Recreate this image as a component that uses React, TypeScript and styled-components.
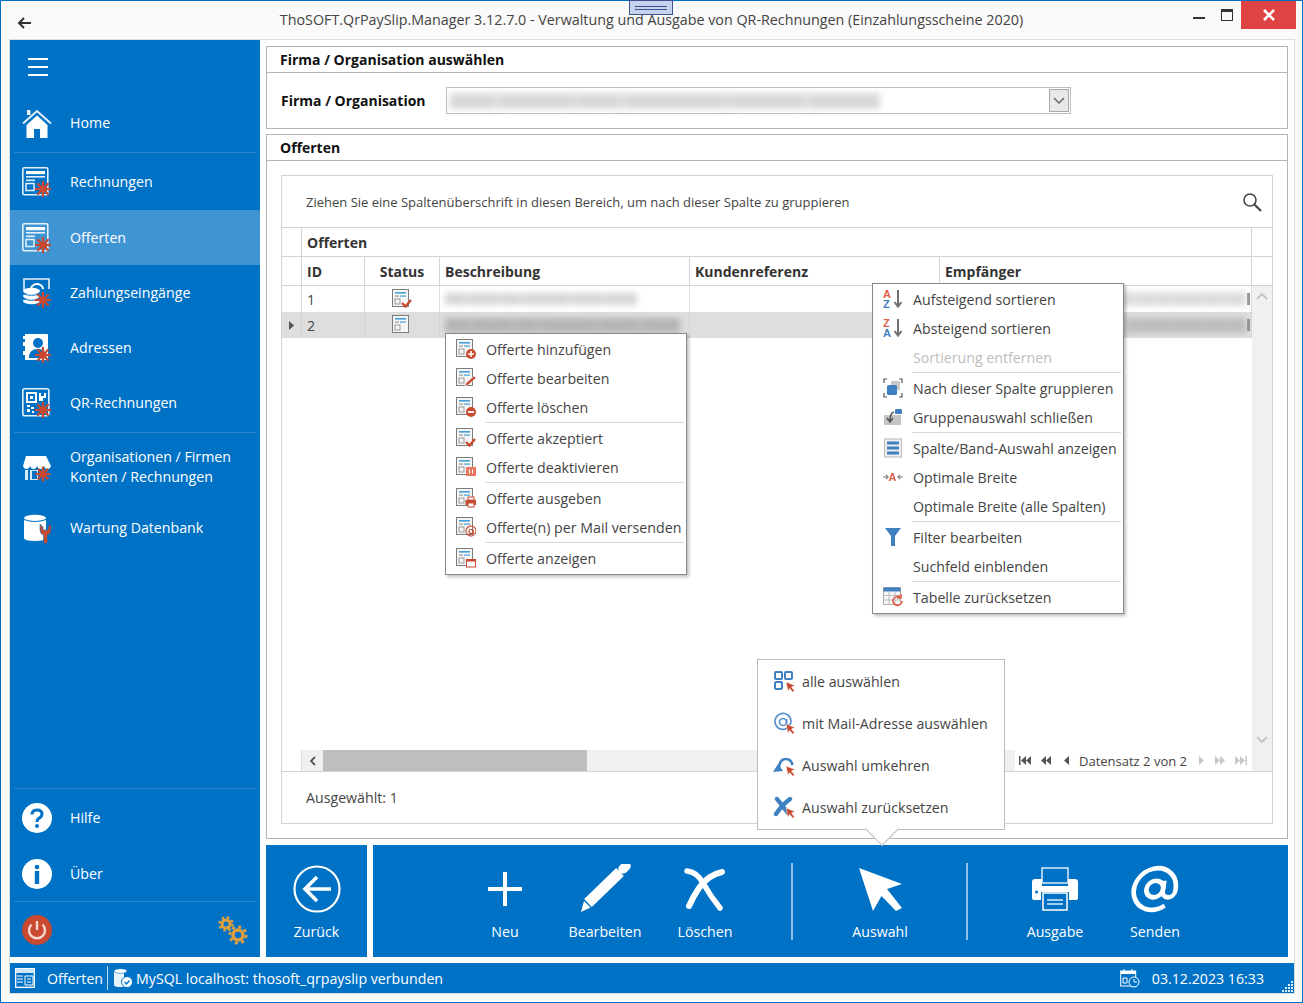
import React from "react";
import styled, { createGlobalStyle } from "styled-components";

const BLUE = "#0072c6";
const RED = "#c8492f";
const FONT = `"Open Sans", "Noto Sans", sans-serif`;

const Global = createGlobalStyle`
  html, body { margin: 0; padding: 0; background: #fafafa; overflow: hidden; }
  * { box-sizing: border-box; }
  body { font-family: ${FONT}; font-size: 14.2px; color: #444; }
`;

const Win = styled.div`
  position: relative; width: 1303px; height: 1003px; border: 1px solid ${BLUE};
  background: #fafafa; display: flex; flex-direction: column;
`;
const TitleBar = styled.header`
  height: 38px; display: grid; grid-template-columns: 1fr auto 1fr; align-items: start;
`;
const BackBtn = styled.div`padding: 13px 0 0 16px; height: 38px;`;
const Title = styled.div`padding-top: 9px; font-size: 14.3px; color: #444; white-space: nowrap;`;
const WinCtl = styled.div`display: flex; justify-content: flex-end; padding-right: 6px;`;
const WinBtn = styled.div`width: 28px; height: 28px;`;
const CloseBtn = styled.div`
  width: 55px; height: 28px; background: #e04343; display: flex; align-items: center; justify-content: center;
`;
const Handle = styled.div`
  position: absolute; left: 628px; top: -1px; width: 44px; height: 15px; background: #c6d3ee;
  border: 1px solid #3f5290; display: flex; flex-direction: column; gap: 2px; align-items: center; padding-top: 5px;
`;
const HandleLine = styled.i`display: block; width: 32px; height: 1px; background: #3f5290;`;

const Frame = styled.div`
  margin: 0 7px 8px 8px; flex: 1; border: 1px solid #dcdcdc; background: #fff;
  display: flex; flex-direction: column; gap: 6px;
`;
const Main = styled.div`display: flex; gap: 6px; height: 917px;`;

const Side = styled.nav`width: 250px; background: ${BLUE}; display: flex; flex-direction: column; color: #fff;`;
const Burger = styled.div`height: 54px; padding: 18px 0 0 18px; display: flex; flex-direction: column; gap: 6px;`;
const BurgerLine = styled.i`display: block; width: 20px; height: 2px; background: #fff;`;
const NavItem = styled.div<{ $h: number; $active?: boolean }>`
  height: ${p => p.$h}px; flex: none; display: flex; align-items: center; padding-left: 12px; gap: 18px;
  background: ${p => (p.$active ? "#3f94d3" : "transparent")}; font-size: 14.2px; line-height: 20px; color: #fff;
`;
const NavIcon = styled.svg`width: 30px; height: 30px; flex: none; display: block;`;
const NavSep = styled.hr`margin: 0 4px; height: 1px; flex: none; border: 0; background: #2a88cf;`;
const NavGap = styled.div<{ $h?: number }>`height: ${p => p.$h ?? 0}px; flex: ${p => (p.$h ? "none" : 1)};`;
const PowerRow = styled.div`height: 55px; flex: none; display: flex; align-items: center; justify-content: space-between; padding: 0 12px;`;

const Content = styled.div`width: 1022px; display: flex; flex-direction: column; padding-top: 6px;`;
const Panel = styled.section<{ $h: number }>`
  height: ${p => p.$h}px; border: 1px solid #b4b4b4; display: flex; flex-direction: column; margin-bottom: 5px; flex: none;
`;
const PanelHead = styled.h2`
  margin: 0; height: 26px; flex: none; border-bottom: 1px solid #b4b4b4; padding-left: 13px;
  font-size: 14px; line-height: 25px; font-weight: 700; color: #111;
`;
const FirmaRow = styled.div`display: flex; align-items: center; padding: 14px 0 0 14px; gap: 18px;`;
const FirmaLabel = styled.label`width: 147px; font-size: 14px; font-weight: 700; color: #111;`;
const Combo = styled.div`
  width: 625px; height: 27px; border: 1px solid #bcbcbc; display: flex; align-items: center; justify-content: space-between; padding: 0 1px 0 3px;
`;
const ComboBtn = styled.div`
  width: 20px; height: 23px; background: #e9e9e9; border: 1px solid #a8a8a8; display: flex; align-items: center; justify-content: center;
`;
const Blur = styled.div<{ $w: number; $tone: string; $h?: number }>`
  width: ${p => p.$w}px; height: ${p => p.$h ?? 12}px; flex: none;
  background: linear-gradient(90deg, ${p => p.$tone} 0 9%, ${p => p.$tone}cc 11%, ${p => p.$tone} 13% 27%, ${p => p.$tone}d8 29%, ${p => p.$tone} 31% 38%, ${p => p.$tone}cc 40%, ${p => p.$tone} 42% 63%, ${p => p.$tone}d8 65%, ${p => p.$tone} 67% 81%, ${p => p.$tone}cc 83%, ${p => p.$tone} 85% 100%);
  filter: blur(3px);
`;

const GridBox = styled.div`
  margin: 14px; flex: 1; border: 1px solid #d4d4d4; display: flex; flex-direction: column; font-size: 13px;
`;
const GroupBar = styled.div`
  height: 52px; flex: none; border-bottom: 1px solid #d4d4d4; display: flex; align-items: center; justify-content: space-between;
  padding: 0 10px 0 24px; font-size: 13px; color: #444;
`;
const COLS = "20px 63px 75px 250px 250px 312px 20px";
const HeadRow = styled.div`
  display: grid; grid-template-columns: ${COLS}; height: 29px; flex: none; border-bottom: 1px solid #d4d4d4;
`;
const BandRow = styled.div`
  display: grid; grid-template-columns: 20px 950px 20px; height: 29px; flex: none; border-bottom: 1px solid #d4d4d4;
`;
const Cell = styled.div<{ $center?: boolean }>`
  border-right: 1px solid #d4d4d4; padding-left: ${p => (p.$center ? 0 : 5)}px; display: flex; align-items: center; overflow: hidden;
  font-size: 14px; font-weight: 700; color: #333; justify-content: ${p => (p.$center ? "center" : "flex-start")};
`;
const LastCell = styled.div``;
const Data = styled.div`display: flex; height: 485px; flex: none;`;
const DataLeft = styled.div`width: 970px; display: flex; flex-direction: column;`;
const Rows = styled.div`flex: 1;`;
const DataRow = styled.div<{ $sel?: boolean }>`
  display: grid; grid-template-columns: 20px 63px 75px 250px 250px 312px; height: 26px;
  background: ${p => (p.$sel ? "#dedede" : "#fff")};
`;
const DataCell = styled.div<{ $center?: boolean; $sel?: boolean }>`
  border-right: 1px solid ${p => (p.$sel ? "#d2d2d2" : "#dcdcdc")}; padding-left: ${p => (p.$center ? 0 : 5)}px; display: flex; align-items: center; gap: 0;
  font-size: 14.2px; color: #444; overflow: hidden; justify-content: ${p => (p.$center ? "center" : "flex-start")};
`;
const MailCell = styled(DataCell)`justify-content: flex-end; padding-right: 1px;`;
const EndMark = styled.i`display: block; width: 3px; height: 12px; background: #8a8a8a; margin-left: 1px; flex: none;`;
const VScroll = styled.div`
  width: 20px; background: #f0f0f0; display: flex; flex-direction: column; justify-content: space-between; align-items: center; padding: 6px 0 27px;
`;
const HScroll = styled.div`height: 21px; flex: none; display: flex; background: #f0f0f0; border-top: 0;`;
const HBlank = styled.div`width: 20px; background: #fff; border-right: 1px solid #dcdcdc;`;
const HArrow = styled.div`width: 21px; display: flex; align-items: center; justify-content: center;`;
const HThumb = styled.div`width: 264px; background: #bebebe;`;
const HTrack = styled.div`width: 428px;`;
const Pager = styled.div`
  flex: 1; background: #fff; display: flex; align-items: center; padding-left: 4px; font-size: 13px; color: #444; white-space: nowrap;
`;
const PagerText = styled.span`margin: 1px 11px 0 9px;`;
const PagerIcon = styled.svg<{ $w: number; $gap?: number }>`width: ${p => p.$w}px; height: 11px; flex: none; margin-right: ${p => p.$gap ?? 0}px;`;
const Foot = styled.div`flex: 1; border-top: 1px solid #d4d4d4; display: flex; align-items: center; padding: 0 0 0 24px; font-size: 14.2px; color: #444;`;

const ToolRow = styled.div`display: flex; gap: 6px; height: 112px; margin-top: 1px;`;
const ToolBlock = styled.div`background: ${BLUE}; display: flex; align-items: stretch; color: #fff;`;
const BackBlock = styled(ToolBlock)`width: 101px; justify-content: center;`;
const MainBlock = styled(ToolBlock)`flex: 1; padding-left: 82px;`;
const ToolBtn = styled.div`
  width: 100px; display: flex; flex-direction: column; align-items: center; font-size: 14.2px; color: #fff; padding-top: 19px;
`;
const ToolIconBox = styled.div`height: 50px; display: flex; align-items: center; justify-content: center; margin-bottom: 8px;`;
const ToolLabel = styled.span`line-height: 20px; white-space: nowrap;`;
const ToolSep = styled.div`width: 2px; height: 77px; margin: 18px 37px 0 36px; background: #8fc2e6;`;

const Status = styled.footer`
  height: 30px; background: ${BLUE}; color: #fff; display: flex; align-items: center; position: relative; padding-left: 5px; font-size: 14.2px; white-space: nowrap;
`;
const StatusIcon = styled.svg`width: 20px; height: 20px; flex: none; display: block;`;
const StatusText = styled.span`margin-left: 12px;`;
const StatusSep = styled.i`display: block; width: 1px; height: 24px; background: #bcdcf2; margin: 0 5px 0 4px;`;
const StatusDb = styled.span`margin-left: 3px;`;
const StatusRight = styled.div`margin-left: auto; display: flex; align-items: center; gap: 12px; padding-right: 30px;`;
const Grip = styled.svg`position: absolute; right: 1px; bottom: 1px; width: 11px; height: 11px;`;

const Menu = styled.div`
  position: absolute; background: #fff; border: 1px solid #85898f; box-shadow: 2px 2px 3px rgba(0,0,0,.25);
  padding: 0.5px 2px 1px 0; z-index: 5; color: #444; font-size: 14.2px; white-space: nowrap;
`;
const OfferMenu = styled(Menu)`left: 444px; top: 332px; width: 242px; height: 242px;`;
const ColumnMenu = styled(Menu)`left: 871px; top: 282px; width: 252px; height: 331px;`;
const Item = styled.div<{ $off?: boolean }>`
  height: 29px; display: flex; align-items: center; gap: 10px; padding-left: 10px; color: ${p => (p.$off ? "#bdbdbd" : "#444")};
`;
const ItemIcon = styled.svg`width: 20px; height: 20px; flex: none; display: block;`;
const MenuSep = styled.hr`height: 2px; border: 0; border-top: 1px solid #d8d8d8; margin: 0 0 0 39px;`;
const SelectPop = styled.div`
  position: absolute; left: 756px; top: 658px; width: 248px; height: 171px; background: #fff; border: 1px solid #bcbcbc;
  z-index: 5; color: #444; font-size: 14.2px; white-space: nowrap;
  &::after {
    content: ""; position: absolute; left: 112px; bottom: -12px; width: 23px; height: 23px; background: #fff;
    border-right: 1px solid #bcbcbc; border-bottom: 1px solid #bcbcbc; transform: rotate(45deg);
  }
`;
const PopItem = styled.div`height: 42px; display: flex; align-items: center; gap: 7px; padding-left: 15px;`;
const PopIcon = styled.svg`width: 22px; height: 22px; flex: none; display: block;`;

const Spark = ({ x = 21, y = 22, r = 8 }: { x?: number; y?: number; r?: number }) => {
  const d = r * 0.707;
  return (
    <g stroke={RED} strokeWidth={2.2} fill={RED}>
      <line x1={x - r} y1={y} x2={x + r} y2={y} />
      <line x1={x} y1={y - r} x2={x} y2={y + r} />
      <line x1={x - d} y1={y - d} x2={x + d} y2={y + d} />
      <line x1={x - d} y1={y + d} x2={x + d} y2={y - d} />
      <circle cx={x} cy={y} r={r * 0.45} stroke="none" />
    </g>
  );
};

const DocLines = () => (
  <g>
    <rect x=".8" y=".8" width="25" height="27" rx="1.5" fill="none" stroke="#e4f1fb" strokeWidth="1.6" />
    <rect x="4" y="4" width="19" height="3.200" fill="#fff" />
    <rect x="4" y="9" width="19" height="1.600" fill="#e4f1fb" />
    <rect x="4" y="12.500" width="9" height="1.600" fill="#e4f1fb" />
    <rect x="4" y="16.500" width="8" height="7" fill="none" stroke="#e4f1fb" strokeWidth="1.500" />
  </g>
);

const nav = {
  home: (
    <NavIcon viewBox="0 0 30 30">
      <path d="M1 15.500 15 3 29 15.500" fill="none" stroke="#e4f1fb" strokeWidth="2" />
      <rect x="5" y="2" width="3.500" height="5" fill="#e4f1fb" />
      <path d="M4.500 17 15 7.500 25.500 17v13H18V21h-6v9H4.500z" fill="#fff" />
    </NavIcon>
  ),
  doc: (
    <NavIcon viewBox="0 0 30 30">
      <DocLines />
      <Spark />
    </NavIcon>
  ),
  pay: (
    <NavIcon viewBox="0 0 30 30">
      <path d="M2 12V1h25v10" fill="none" stroke="#e4f1fb" strokeWidth="1.600" />
      <path d="M9 11a6 5 0 0 1 12 0" fill="none" stroke="#fff" strokeWidth="2" />
      <ellipse cx="9.500" cy="13" rx="8.500" ry="3.200" fill="#fff" />
      <ellipse cx="9.500" cy="18" rx="8.500" ry="3.200" fill="#fff" />
      <ellipse cx="9.500" cy="23" rx="8.500" ry="3.200" fill="#fff" />
      <path d="M1 15.600q8.500 3.400 17 0M1 20.600q8.500 3.400 17 0" fill="none" stroke={BLUE} />
      <Spark />
    </NavIcon>
  ),
  addr: (
    <NavIcon viewBox="0 0 30 30">
      <path d="M3 1h22a1 1 0 0 1 1 1v24a1 1 0 0 1-1 1H3v-5H1v-4h2v-5H1v-4h2V6H1V3h2z" fill="#fff" />
      <circle cx="16" cy="10" r="5" fill={BLUE} />
      <path d="M7 25c0-6 3-9 9-9s8 3 8 9z" fill={BLUE} />
      <Spark />
    </NavIcon>
  ),
  qr: (
    <NavIcon viewBox="0 0 30 30">
      <rect x=".8" y=".8" width="26" height="27" rx="2" fill="none" stroke="#e4f1fb" strokeWidth="1.600" />
      <rect x="5" y="5" width="9" height="9" fill="none" stroke="#fff" strokeWidth="2" />
      <rect x="8" y="8" width="3" height="3" fill="#fff" />
      <path d="M17 5h2v3h3V5h2v5h-3v3h-4z" fill="#fff" />
      <path d="M5 17h3v2H5zM9 19h3v2H9zM5 21h3v3H5zM10 23h2v2h-2z" fill="#fff" />
      <Spark />
    </NavIcon>
  ),
  org: (
    <NavIcon viewBox="0 0 30 30">
      <path d="M4 4h20l5 10q-1 3-3.600 3T22 14q-1 3-3.500 3T15 14q-1 3-3.500 3T8 14q-1 3-3.500 3T1 14z" fill="#fff" />
      <path d="M3 18h3v10H3zM8 18h8v10H8z" fill="#fff" opacity=".85" />
      <rect x="10" y="19" width="5" height="8" fill={BLUE} />
      <Spark x={21} y={22} r={7.500} />
    </NavIcon>
  ),
  db: (
    <NavIcon viewBox="0 0 30 30">
      <path d="M2 6v19q0 3 11 3t11-3V6z" fill="#fff" />
      <ellipse cx="13" cy="5" rx="11" ry="3.200" fill="#fff" />
      <path d="M2 6.500q11 4 22 0" fill="none" stroke={BLUE} strokeWidth="1.200" />
      <path d="M18 11v6q0 4 3.500 5v9h4v-9q3.500-1 3.500-5v-6l-3 3v3h-5v-3z" fill={RED} stroke={BLUE} strokeWidth=".6" />
    </NavIcon>
  ),
  help: (
    <NavIcon viewBox="0 0 30 30">
      <circle cx="15" cy="15" r="15" fill="#fff" />
      <path d="M10 11.500q0-4.500 5-4.500t5 4q0 2.500-2.500 3.800Q15 16 15 19" fill="none" stroke={BLUE} strokeWidth="3" />
      <circle cx="15" cy="23" r="2" fill={BLUE} />
    </NavIcon>
  ),
  info: (
    <NavIcon viewBox="0 0 30 30">
      <circle cx="15" cy="15" r="15" fill="#fff" />
      <circle cx="15" cy="8" r="2.300" fill={BLUE} />
      <rect x="12.800" y="12" width="4.400" height="13" fill={BLUE} />
    </NavIcon>
  ),
  power: (
    <NavIcon viewBox="0 0 30 30">
      <circle cx="15" cy="15" r="15" fill={RED} />
      <path d="M9.500 9.500a8 8 0 1 0 11 0" fill="none" stroke="#f6d8d0" strokeWidth="2.400" />
      <line x1="15" y1="6" x2="15" y2="15" stroke="#f6d8d0" strokeWidth="2.400" />
    </NavIcon>
  ),
  gears: (
    <NavIcon viewBox="0 0 30 30">
      <g fill="none" stroke="#e0a040">
        <circle cx="8" cy="9" r="4" strokeWidth="3" />
        <circle cx="8" cy="9" r="6.500" strokeWidth="2.500" strokeDasharray="2.500 2.600" />
        <circle cx="20" cy="20" r="5" strokeWidth="3.500" />
        <circle cx="20" cy="20" r="8.200" strokeWidth="2.800" strokeDasharray="3 3.430" />
      </g>
    </NavIcon>
  ),
};

const BaseDoc = ({ color = "#4a9fd4" }: { color?: string }) => (
  <g>
    <rect x=".5" y=".5" width="16" height="17" fill="#f5f5f5" stroke="#7c7c7c" />
    <rect x="3" y="3" width="11" height="1.600" fill={color} />
    <rect x="8" y="6.500" width="6" height="1.200" fill={color} />
    <rect x="3" y="6.500" width="4" height="1.200" fill="#999" />
    <rect x="3" y="10" width="5" height="5" fill="none" stroke="#999" />
  </g>
);

const badges: Record<string, React.ReactNode> = {
  add: (<g><circle cx="15" cy="15" r="5" fill={RED} /><path d="M12 15h6M15 12v6" stroke="#fff" strokeWidth="1.500" /></g>),
  edit: (<path d="M9 18l1-3L18 8l2 2-8 7z" fill={RED} stroke="#fff" strokeWidth=".5" />),
  del: (<g><circle cx="15" cy="15" r="5" fill={RED} /><path d="M12 15h6" stroke="#fff" strokeWidth="1.800" /></g>),
  ok: (<path d="M10 14l3.500 3.500L19 11" fill="none" stroke={RED} strokeWidth="2.400" />),
  off: (<g><rect x="10" y="10" width="10" height="9" fill="#e8775f" /><path d="M13.500 12.500v4M16.500 12.500v4" stroke="#fff" /></g>),
  print: (<g><rect x="12" y="9" width="6" height="3" fill="#fff" stroke={RED} /><rect x="9.500" y="12" width="10.500" height="5" fill={RED} /><rect x="12" y="15" width="6" height="4" fill="#fff" stroke={RED} /></g>),
  mail: (<g fill="none" stroke={RED} strokeWidth="1.100"><circle cx="15" cy="14.500" r="2" /><path d="M17 12.500v3q0 1.500 1.500 1.500t1.500-3a5 5 0 1 0-2 4" /></g>),
  show: (<g><rect x="10.500" y="11.500" width="9" height="7.500" fill="#fff" stroke={RED} /><rect x="10.500" y="11.500" width="9" height="2" fill={RED} /></g>),
};

const FormIcon = ({ b }: { b: string }) => (
  <ItemIcon viewBox="0 0 20 20">
    <BaseDoc />
    {badges[b]}
  </ItemIcon>
);

const Tri = ({ dir, c }: { dir: "l" | "r"; c: string }) => (
  <path d={dir === "l" ? "M6 1v9L1 5.500z" : "M1 1v9l5-4.500z"} fill={c} />
);

const offerItems: ([string, string] | null)[] = [
  ["add", "Offerte hinzufügen"], ["edit", "Offerte bearbeiten"], ["del", "Offerte löschen"], null,
  ["ok", "Offerte akzeptiert"], ["off", "Offerte deaktivieren"], null,
  ["print", "Offerte ausgeben"], ["mail", "Offerte(n) per Mail versenden"], null,
  ["show", "Offerte anzeigen"],
];

const SortIcon = ({ a, b, ca, cb }: { a: string; b: string; ca: string; cb: string }) => (
  <ItemIcon viewBox="0 0 20 20">
    <text x="0" y="9" fontSize="11" fontWeight="700" fontFamily="Liberation Sans" fill={ca}>{a}</text>
    <text x="0" y="19" fontSize="11" fontWeight="700" fontFamily="Liberation Sans" fill={cb}>{b}</text>
    <path d="M15 1v15M11.500 13l3.500 4.500 3.500-4.500" fill="none" stroke="#707070" strokeWidth="2" />
  </ItemIcon>
);

const colIcons: Record<string, React.ReactNode> = {
  asc: <SortIcon a="A" b="Z" ca="#e0604a" cb="#3f80c0" />,
  desc: <SortIcon a="Z" b="A" ca="#e0604a" cb="#3f80c0" />,
  group: (
    <ItemIcon viewBox="0 0 20 20">
      <path d="M1 5V1h3M16 1h3v4M19 15v4h-3M4 19H1v-4" fill="none" stroke="#555" strokeWidth="1.200" />
      <rect x="8" y="3" width="9" height="9" rx="1" fill="#c8c8c8" />
      <rect x="4" y="7" width="10" height="10" rx="1.500" fill="#3f80c0" />
    </ItemIcon>
  ),
  close: (
    <ItemIcon viewBox="0 0 20 20">
      <rect x="1" y="8" width="17" height="10" fill="#c4c4c4" />
      <rect x="12" y="2" width="7" height="5" rx="1" fill="#3f80c0" />
      <path d="M11 5Q7 6 7 14M4 11l3 4 3-4" fill="none" stroke="#555" strokeWidth="1.600" />
    </ItemIcon>
  ),
  list: (
    <ItemIcon viewBox="0 0 20 20">
      <rect x="1.500" y="1" width="17" height="18" fill="#eee" stroke="#bbb" />
      <rect x="4" y="3.500" width="12" height="3" fill="#3f80c0" />
      <rect x="4" y="8.500" width="12" height="3" fill="#3f80c0" />
      <rect x="4" y="13.500" width="12" height="3" fill="#3f80c0" />
    </ItemIcon>
  ),
  fit: (
    <ItemIcon viewBox="0 0 20 20">
      <path d="M0 10h3.500M3 8l2 2-2 2M20 10h-3.500M17 8l-2 2 2 2" fill="none" stroke="#777" strokeWidth="1.200" />
      <text x="5.500" y="14" fontSize="11" fontWeight="700" fontFamily="Liberation Sans" fill="#e0604a">A</text>
    </ItemIcon>
  ),
  filter: (
    <ItemIcon viewBox="0 0 20 20">
      <path d="M2 1h16l-6 8v10h-4V9z" fill="#3f80c0" />
    </ItemIcon>
  ),
  reset: (
    <ItemIcon viewBox="0 0 20 20">
      <rect x=".5" y=".5" width="17" height="17" fill="#f6f6f6" stroke="#b5a9a0" />
      <rect x=".5" y=".5" width="17" height="4" fill="#3f80c0" />
      <path d="M.5 8.500h17M.5 13h17M6 4v14M12 4v14" stroke="#bbb" />
      <path d="M19 14a4.500 4.500 0 1 1-1.500-3.500M18 7v4h-4" fill="none" stroke="#e0604a" strokeWidth="1.600" />
    </ItemIcon>
  ),
};

const colItems: ([string | null, string, boolean?] | null)[] = [
  ["asc", "Aufsteigend sortieren"], ["desc", "Absteigend sortieren"], [null, "Sortierung entfernen", true], null,
  ["group", "Nach dieser Spalte gruppieren"], ["close", "Gruppenauswahl schließen"], null,
  ["list", "Spalte/Band-Auswahl anzeigen"], ["fit", "Optimale Breite"], [null, "Optimale Breite (alle Spalten)"], null,
  ["filter", "Filter bearbeiten"], [null, "Suchfeld einblenden"], null,
  ["reset", "Tabelle zurücksetzen"],
];

const Cur = () => <path d="M13 12l9 3.500-3.500 1.500 3 4-1.800 1.200-3-3.800-1.700 2.800z" fill={RED} stroke="#fff" strokeWidth=".5" />;
const popIcons: React.ReactNode[] = [
  <PopIcon viewBox="0 0 22 22" key="a">
    <g fill="none" stroke="#3f80c0" strokeWidth="2"><rect x="2" y="2" width="7" height="7" rx="1" /><rect x="12" y="2" width="7" height="7" rx="1" /><rect x="2" y="12" width="7" height="7" rx="1" /></g>
    <Cur />
  </PopIcon>,
  <PopIcon viewBox="0 0 22 22" key="b">
    <g fill="none" stroke="#5a94cc" strokeWidth="1.700"><circle cx="10" cy="10" r="3.500" /><path d="M13.500 7v4q0 2 1.800 2 2.700 0 2.700-4a8 8 0 1 0-3.500 7" /></g>
    <Cur />
  </PopIcon>,
  <PopIcon viewBox="0 0 22 22" key="c">
    <path d="M6 15Q6 5 13 5q5 0 6.500 6" fill="none" stroke="#3f80c0" strokeWidth="2.600" />
    <path d="M0 18l10-1-5-7z" fill="#3f80c0" />
    <Cur />
  </PopIcon>,
  <PopIcon viewBox="0 0 22 22" key="d">
    <path d="M4 3l11 14M17 3Q9 9 3 18" fill="none" stroke="#3f80c0" strokeWidth="4.400" strokeLinecap="round" />
    <Cur />
  </PopIcon>,
];
const popItems = ["alle auswählen", "mit Mail-Adresse auswählen", "Auswahl umkehren", "Auswahl zurücksetzen"];

const tools = {
  back: (
    <svg width="48" height="48" viewBox="0 0 48 48">
      <circle cx="24" cy="24" r="22.500" fill="none" stroke="#fff" strokeWidth="2.200" />
      <path d="M38 24H12M24 12 12 24l12 12" fill="none" stroke="#fff" strokeWidth="3.600" />
    </svg>
  ),
  add: (
    <svg width="36" height="36" viewBox="0 0 36 36">
      <path d="M18 1v34M1 18h34" stroke="#fff" strokeWidth="4" />
    </svg>
  ),
  edit: (
    <svg width="52" height="50" viewBox="0 0 52 50">
      <line x1="9" y1="39" x2="41" y2="8" stroke="#fff" strokeWidth="11" />
      <line x1="44" y1="5" x2="47" y2="2" stroke="#fff" strokeWidth="9.500" strokeLinecap="round" />
      <path d="M2 48l3-11 6.500 6.500z" fill="#fff" />
    </svg>
  ),
  del: (
    <svg width="42" height="44" viewBox="0 0 42 44">
      <path d="M3 4q10 1 16 12 8 14 17 25" fill="none" stroke="#fff" strokeWidth="5.500" strokeLinecap="round" />
      <path d="M38 5Q24 8 15 21 9 30 5 39" fill="none" stroke="#fff" strokeWidth="6" strokeLinecap="round" />
    </svg>
  ),
  sel: (
    <svg width="47" height="47" viewBox="0 0 47 47">
      <path d="M2 2l43 16-15 5 15 19-6 3-14.500-15L16 45z" fill="#fff" />
    </svg>
  ),
  print: (
    <svg width="48" height="45" viewBox="0 0 48 45">
      <rect x="11" y="1" width="26" height="15" fill="none" stroke="#d9ecf9" strokeWidth="1.500" />
      <path d="M4 12h7v7h26v-7h7q3 0 3 3v16q0 2-3 2h-6v-8H10v8H4q-3 0-3-2V15q0-3 3-3z" fill="#fff" />
      <circle cx="5.500" cy="25" r="1.500" fill={BLUE} />
      <rect x="12" y="26" width="24" height="17" fill={BLUE} stroke="#fff" strokeWidth="1.500" />
      <path d="M16 33h16M16 37h16" stroke="#d9ecf9" strokeWidth="1.500" />
    </svg>
  ),
  at: (
    <svg width="50" height="50" viewBox="0 0 24 24">
      <g fill="none" stroke="#fff" strokeWidth="2.200" transform="skewX(-9) translate(2.300 0)">
        <circle cx="11.500" cy="12" r="4" />
        <path d="M15.500 8v5a3 3 0 0 0 6 0v-1a10 10 0 1 0-4 8" />
      </g>
    </svg>
  ),
};

const Tool = ({ icon, label }: { icon: React.ReactNode; label: string }) => (
  <ToolBtn>
    <ToolIconBox>{icon}</ToolIconBox>
    <ToolLabel>{label}</ToolLabel>
  </ToolBtn>
);

export default function App() {
  return (
    <>
      <Global />
      <Win>
        <TitleBar>
          <BackBtn>
            <svg width="14" height="12" viewBox="0 0 14 12"><path d="M14 6H2M7 1 2 6l5 5" fill="none" stroke="#333" strokeWidth="2" /></svg>
          </BackBtn>
          <Title>ThoSOFT.QrPaySlip.Manager 3.12.7.0 - Verwaltung und Ausgabe von QR-Rechnungen (Einzahlungsscheine 2020)</Title>
          <WinCtl>
            <WinBtn>
              <svg width="28" height="28" viewBox="0 0 28 28"><rect x="8" y="16" width="12" height="2" fill="#333" /></svg>
            </WinBtn>
            <WinBtn>
              <svg width="28" height="28" viewBox="0 0 28 28"><rect x="8.500" y="8.500" width="11" height="11" fill="none" stroke="#333" /><rect x="8" y="8" width="12" height="3" fill="#333" /></svg>
            </WinBtn>
            <CloseBtn>
              <svg width="12" height="12" viewBox="0 0 12 12"><path d="M1 1l10 10M11 1 1 11" stroke="#fff" strokeWidth="2.600" /></svg>
            </CloseBtn>
          </WinCtl>
        </TitleBar>
        <Handle><HandleLine /><HandleLine /></Handle>
        <Frame>
          <Main>
            <Side>
              <Burger><BurgerLine /><BurgerLine /><BurgerLine /></Burger>
              <NavItem $h={58}>{nav.home}<span>Home</span></NavItem>
              <NavSep />
              <NavItem $h={57}>{nav.doc}<span>Rechnungen</span></NavItem>
              <NavItem $h={55} $active>{nav.doc}<span>Offerten</span></NavItem>
              <NavItem $h={55}>{nav.pay}<span>Zahlungseingänge</span></NavItem>
              <NavItem $h={55}>{nav.addr}<span>Adressen</span></NavItem>
              <NavItem $h={55}>{nav.qr}<span>QR-Rechnungen</span></NavItem>
              <NavGap $h={2} />
              <NavSep />
              <NavItem $h={68}>{nav.org}<span>Organisationen / Firmen<br />Konten / Rechnungen</span></NavItem>
              <NavItem $h={54}>{nav.db}<span>Wartung Datenbank</span></NavItem>
              <NavGap />
              <NavSep />
              <NavItem $h={57}>{nav.help}<span>Hilfe</span></NavItem>
              <NavItem $h={55}>{nav.info}<span>Über</span></NavItem>
              <NavSep />
              <PowerRow>{nav.power}{nav.gears}</PowerRow>
            </Side>
            <Content>
              <Panel $h={83}>
                <PanelHead>Firma / Organisation auswählen</PanelHead>
                <FirmaRow>
                  <FirmaLabel>Firma / Organisation</FirmaLabel>
                  <Combo>
                    <Blur $w={430} $tone="#d8d8d8" $h={16} />
                    <ComboBtn>
                      <svg width="12" height="8" viewBox="0 0 12 8"><path d="M1 1l5 5 5-5" fill="none" stroke="#666" strokeWidth="1.500" /></svg>
                    </ComboBtn>
                  </Combo>
                </FirmaRow>
              </Panel>
              <Panel $h={705}>
                <PanelHead>Offerten</PanelHead>
                <GridBox>
                  <GroupBar>
                    <span>Ziehen Sie eine Spaltenüberschrift in diesen Bereich, um nach dieser Spalte zu gruppieren</span>
                    <svg width="20" height="20" viewBox="0 0 20 20"><circle cx="8" cy="8" r="6" fill="none" stroke="#444" strokeWidth="1.600" /><path d="M12.500 12.500 19 19" stroke="#444" strokeWidth="2.200" /></svg>
                  </GroupBar>
                  <BandRow>
                    <Cell />
                    <Cell>Offerten</Cell>
                    <LastCell />
                  </BandRow>
                  <HeadRow>
                    <Cell />
                    <Cell>ID</Cell>
                    <Cell $center>Status</Cell>
                    <Cell>Beschreibung</Cell>
                    <Cell>Kundenreferenz</Cell>
                    <Cell>Empfänger</Cell>
                    <LastCell />
                  </HeadRow>
                  <Data>
                    <DataLeft>
                      <Rows>
                        <DataRow>
                          <DataCell />
                          <DataCell>1</DataCell>
                          <DataCell $center>
                            <ItemIcon viewBox="0 0 20 20"><BaseDoc />{badges.ok}</ItemIcon>
                          </DataCell>
                          <DataCell><Blur $w={192} $tone="#d6d6d6" /></DataCell>
                          <DataCell />
                          <MailCell>
                            <Blur $w={125} $tone="#dcdcdc" $h={14} />
                            <EndMark />
                          </MailCell>
                        </DataRow>
                        <DataRow $sel>
                          <DataCell $sel $center>
                            <svg width="7" height="11" viewBox="0 0 7 11"><Tri dir="r" c="#555" /></svg>
                          </DataCell>
                          <DataCell $sel>2</DataCell>
                          <DataCell $sel $center>
                            <ItemIcon viewBox="0 0 20 20"><BaseDoc /></ItemIcon>
                          </DataCell>
                          <DataCell $sel><Blur $w={235} $tone="#b4b4b4" $h={15} /></DataCell>
                          <DataCell $sel />
                          <MailCell $sel>
                            <Blur $w={120} $tone="#bcbcbc" $h={15} />
                            <EndMark />
                          </MailCell>
                        </DataRow>
                      </Rows>
                      <HScroll>
                        <HBlank />
                        <HArrow>
                          <svg width="10" height="10" viewBox="0 0 10 10"><path d="M7 1 3 5l4 4" fill="none" stroke="#555" strokeWidth="1.800" /></svg>
                        </HArrow>
                        <HThumb />
                        <HTrack />
                        <Pager>
                          <PagerIcon $w={12} $gap={10} viewBox="0 0 12 11"><rect x="0" y="1" width="1.500" height="9" fill="#555" /><path d="M7 1v9L2 5.500zM12 1v9L7 5.500z" fill="#555" /></PagerIcon>
                          <PagerIcon $w={10} $gap={12} viewBox="0 0 10 11"><path d="M5 1v9L0 5.500zM10 1v9L5 5.500z" fill="#555" /></PagerIcon>
                          <PagerIcon $w={7} viewBox="0 0 7 11"><Tri dir="l" c="#555" /></PagerIcon>
                          <PagerText>Datensatz 2 von 2</PagerText>
                          <PagerIcon $w={7} $gap={10} viewBox="0 0 7 11"><Tri dir="r" c="#c8c8c8" /></PagerIcon>
                          <PagerIcon $w={10} $gap={10} viewBox="0 0 10 11"><path d="M0 1v9l5-4.500zM5 1v9l5-4.500z" fill="#c8c8c8" /></PagerIcon>
                          <PagerIcon $w={12} viewBox="0 0 12 11"><path d="M0 1v9l5-4.500zM5 1v9l5-4.500z" fill="#c8c8c8" /><rect x="10.500" y="1" width="1.500" height="9" fill="#c8c8c8" /></PagerIcon>
                        </Pager>
                      </HScroll>
                    </DataLeft>
                    <VScroll>
                      <svg width="12" height="8" viewBox="0 0 12 8"><path d="M1 7l5-5 5 5" fill="none" stroke="#c4c4c4" strokeWidth="1.800" /></svg>
                      <svg width="12" height="8" viewBox="0 0 12 8"><path d="M1 1l5 5 5-5" fill="none" stroke="#c4c4c4" strokeWidth="1.800" /></svg>
                    </VScroll>
                  </Data>
                  <Foot>Ausgewählt: 1</Foot>
                </GridBox>
              </Panel>
              <ToolRow>
                <BackBlock>
                  <Tool icon={tools.back} label="Zurück" />
                </BackBlock>
                <MainBlock>
                  <Tool icon={tools.add} label="Neu" />
                  <Tool icon={tools.edit} label="Bearbeiten" />
                  <Tool icon={tools.del} label="Löschen" />
                  <ToolSep />
                  <Tool icon={tools.sel} label="Auswahl" />
                  <ToolSep />
                  <Tool icon={tools.print} label="Ausgabe" />
                  <Tool icon={tools.at} label="Senden" />
                </MainBlock>
              </ToolRow>
            </Content>
          </Main>
          <Status>
            <StatusIcon viewBox="0 0 20 20">
              <rect x=".7" y=".7" width="18.600" height="18.600" fill="none" stroke="#fff" strokeWidth="1.300" />
              <rect x="1" y="1" width="18" height="4" fill="#cfe6f7" />
              <path d="M2 8h6M2 11h6M2 14h6M10 8h8v9h-8zM12 11h4M12 14h4" stroke="#fff" fill="none" />
            </StatusIcon>
            <StatusText>Offerten</StatusText>
            <StatusSep />
            <StatusIcon viewBox="0 0 20 20">
              <path d="M1 3v14q0 2 7 2h3V3z" fill="#e8f3fb" />
              <ellipse cx="7.500" cy="3" rx="6.500" ry="2.300" fill="#fff" stroke={BLUE} strokeWidth=".6" />
              <circle cx="14" cy="14" r="5.500" fill="#fff" stroke={BLUE} />
              <path d="M11.500 14l2 2 3-3.500" fill="none" stroke={BLUE} strokeWidth="1.400" />
            </StatusIcon>
            <StatusDb>MySQL localhost: thosoft_qrpayslip verbunden</StatusDb>
            <StatusRight>
              <StatusIcon viewBox="0 0 20 20">
                <rect x=".7" y="3" width="15" height="15" fill="none" stroke="#fff" />
                <rect x="1" y="3" width="15" height="3" fill="#fff" />
                <path d="M4 1v3M12 1v3M3 10h4v5H3z" stroke="#fff" fill="none" />
                <circle cx="14" cy="14" r="5" fill={BLUE} stroke="#fff" />
                <path d="M14 11v3h3" stroke="#fff" fill="none" />
              </StatusIcon>
              <span>03.12.2023 16:33</span>
            </StatusRight>
            <Grip viewBox="0 0 11 11">
              <path d="M9 0h2v2H9zM6 3h2v2H6zM9 3h2v2H9zM3 6h2v2H3zM6 6h2v2H6zM9 6h2v2H9zM0 9h2v2H0zM3 9h2v2H3zM6 9h2v2H6zM9 9h2v2H9z" fill="#dcecf8" />
            </Grip>
          </Status>
        </Frame>
        <OfferMenu>
          {offerItems.map((it, i) =>
            it ? (
              <Item key={i}><FormIcon b={it[0]} /><span>{it[1]}</span></Item>
            ) : (
              <MenuSep key={i} />
            ),
          )}
        </OfferMenu>
        <ColumnMenu>
          {colItems.map((it, i) =>
            it ? (
              <Item key={i} $off={it[2]}>
                {it[0] ? colIcons[it[0]] : <ItemIcon />}
                <span>{it[1]}</span>
              </Item>
            ) : (
              <MenuSep key={i} />
            ),
          )}
        </ColumnMenu>
        <SelectPop>
          {popItems.map((t, i) => (
            <PopItem key={t}>{popIcons[i]}<span>{t}</span></PopItem>
          ))}
        </SelectPop>
      </Win>
    </>
  );
}
